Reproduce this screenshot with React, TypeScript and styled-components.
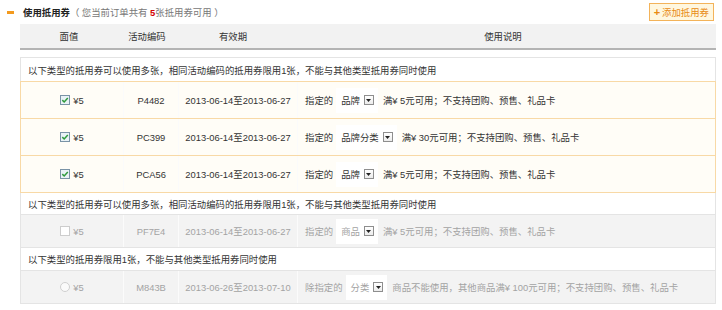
import React from "react";
import styled, { createGlobalStyle } from "styled-components";

type Mark = "checked" | "unchecked" | "radio";

interface I_Coupon {
  code: string;
  from: string;
  to: string;
  prefix: string;
  scope: string;
  rule: string;
  mark: Mark;
  on: boolean;
}

interface I_Group {
  title: string;
  titleHeight: number;
  rowHeight: number;
  coupons: I_Coupon[];
}

const multiText =
  "以下类型的抵用券可以使用多张，相同活动编码的抵用券限用1张，不能与其他类型抵用券同时使用";
const rule5 = "满¥ 5元可用；不支持团购、预售、礼品卡";

const groups: I_Group[] = [
  {
    title: multiText,
    titleHeight: 25,
    rowHeight: 38,
    coupons: [
      { code: "P4482", from: "2013-06-14", to: "2013-06-27", prefix: "指定的", scope: "品牌", rule: rule5, mark: "checked", on: true },
      { code: "PC399", from: "2013-06-14", to: "2013-06-27", prefix: "指定的", scope: "品牌分类", rule: "满¥ 30元可用；不支持团购、预售、礼品卡", mark: "checked", on: true },
      { code: "PCA56", from: "2013-06-14", to: "2013-06-27", prefix: "指定的", scope: "品牌", rule: rule5, mark: "checked", on: true },
    ],
  },
  {
    title: multiText,
    titleHeight: 23,
    rowHeight: 34,
    coupons: [
      { code: "PF7E4", from: "2013-06-14", to: "2013-06-27", prefix: "指定的", scope: "商品", rule: rule5, mark: "unchecked", on: false },
    ],
  },
  {
    title: "以下类型的抵用券限用1张，不能与其他类型抵用券同时使用",
    titleHeight: 24,
    rowHeight: 34,
    coupons: [
      { code: "M843B", from: "2013-06-26", to: "2013-07-10", prefix: "除指定的", scope: "分类", rule: "商品不能使用，其他商品满¥ 100元可用；不支持团购、预售、礼品卡", mark: "radio", on: false },
    ],
  },
];

const MarkIcon: React.FC<{ mark: Mark }> = ({ mark }) => {
  if (mark === "radio") {
    return (
      <svg width="10" height="10" viewBox="0 0 10 10">
        <circle cx="5" cy="5" r="4.5" fill="#fafafa" stroke="#cfcfcf" />
      </svg>
    );
  }
  if (mark === "unchecked") {
    return (
      <svg width="10" height="10" viewBox="0 0 10 10">
        <rect x="0.5" y="0.5" width="9" height="9" fill="#fff" stroke="#cdcdcd" />
      </svg>
    );
  }
  return (
    <svg width="10" height="10" viewBox="0 0 10 10">
      <rect x="0.5" y="0.5" width="9" height="9" fill="#e9f2f6" stroke="#7a93a6" />
      <path d="M2.3 5.1 L4.2 7 L7.8 3" fill="none" stroke="#2e9a3c" strokeWidth="1.5" />
    </svg>
  );
};

const App: React.FC = () => {
  return (
    <Panel>
      <GlobalStyle />
      <TitleBar>
        <TitleMain>
          <Minus />
          <Title>使用抵用券</Title>
          <Sub>
            （ 您当前订单共有 <Count>5</Count>张抵用券可用 ）
          </Sub>
        </TitleMain>
        <AddButton>
          <Plus>+</Plus>添加抵用券
        </AddButton>
      </TitleBar>

      <HeadRow>
        <span>面值</span>
        <span>活动编码</span>
        <span>有效期</span>
        <span>使用说明</span>
      </HeadRow>

      <Body>
        {groups.map((g, gi) => (
          <React.Fragment key={gi}>
            <GroupTitle $h={g.titleHeight}>{g.title}</GroupTitle>
            {g.coupons.map((c) => (
              <Row key={c.code} $on={c.on} $h={g.rowHeight}>
                <Cell $on={c.on}>
                  <Face>
                    <MarkIcon mark={c.mark} />
                    <span>¥5</span>
                  </Face>
                </Cell>
                <Cell $on={c.on}>{c.code}</Cell>
                <Cell $on={c.on}>
                  {c.from}至{c.to}
                </Cell>
                <DescCell $on={c.on}>
                  <span>{c.prefix}</span>
                  <Select>
                    <span>{c.scope}</span>
                    <ArrowBox>
                      <svg width="5" height="3" viewBox="0 0 5 3">
                        <path d="M0 0h5L2.5 3z" fill="#222" />
                      </svg>
                    </ArrowBox>
                  </Select>
                  <Rule>{c.rule}</Rule>
                </DescCell>
              </Row>
            ))}
          </React.Fragment>
        ))}
      </Body>
    </Panel>
  );
};

export default App;

const GlobalStyle = createGlobalStyle`
  body {
    margin: 0;
    background: #fff;
    font-family: "Liberation Sans", "Noto Sans CJK SC", sans-serif;
    font-size: 9.4px;
    color: #333;
  }
`;

const Panel = styled.div`
  width: 722px;
  padding: 0 6px;
  box-sizing: border-box;
`;

const TitleBar = styled.div`
  display: flex;
  align-items: center;
  justify-content: space-between;
  height: 24px;
  padding-left: 1px;
`;

const TitleMain = styled.div`
  display: flex;
  align-items: center;
`;

const Minus = styled.span`
  width: 7px;
  height: 3px;
  background: #f39a1e;
  margin-right: 9px;
`;

const Title = styled.span`
  font-weight: bold;
  color: #222;
`;

const Sub = styled.span`
  color: #777;
`;

const Count = styled.b`
  color: #d40000;
`;

const AddButton = styled.button`
  display: flex;
  align-items: center;
  gap: 2px;
  height: 18px;
  padding: 0 4px;
  margin-right: 2px;
  border: 1px solid #f3b35a;
  background: #fff7df;
  color: #e88a12;
  font: inherit;
  cursor: pointer;
`;

const Plus = styled.b`
  font-size: 11px;
`;

const HeadRow = styled.div`
  display: grid;
  grid-template-columns: 98px 58px 114px 1fr;
  align-items: center;
  height: 24px;
  margin-left: 14px;
  background: #f2f2f2;
  border-bottom: 2px solid #b4b4b4;
  text-align: center;
  color: #333;
`;

const Body = styled.div`
  margin: 7px 0 0 14px;
`;

const GroupTitle = styled.div<{ $h: number }>`
  display: flex;
  align-items: center;
  height: ${(p) => p.$h}px;
  box-sizing: border-box;
  margin-top: -1px;
  padding-left: 7px;
  border: 1px solid #e4e4e4;
  background: #fff;
  color: #333;

  &:first-child {
    margin-top: 0;
  }
`;

const Row = styled.div<{ $on: boolean; $h: number }>`
  position: relative;
  z-index: ${(p) => (p.$on ? 1 : 0)};
  display: grid;
  grid-template-columns: 102px 55px 119px 1fr;
  height: ${(p) => p.$h}px;
  box-sizing: border-box;
  margin-top: -1px;
  border: 1px solid ${(p) => (p.$on ? "#f8d9a6" : "#e4e4e4")};
  background: ${(p) => (p.$on ? "#fffdf7" : "#f3f3f3")};
  color: ${(p) => (p.$on ? "#333" : "#a3a3a3")};
`;

const Cell = styled.div<{ $on: boolean }>`
  display: flex;
  align-items: center;
  justify-content: center;
  box-sizing: border-box;

  & + & {
    border-left: 1px solid ${(p) => (p.$on ? "#ebe7e0" : "#fbfbfb")};
  }
`;

const DescCell = styled(Cell)`
  justify-content: flex-start;
  padding-left: 7px;
  white-space: nowrap;
`;

const Face = styled.span`
  display: flex;
  align-items: center;
  gap: 3px;
`;

const Select = styled.span`
  display: inline-flex;
  align-items: center;
  gap: 4px;
  height: 25px;
  margin-left: 3px;
  padding: 0 4px 0 5px;
  background: #fff;
`;

const ArrowBox = styled.span`
  display: flex;
  align-items: center;
  justify-content: center;
  width: 10px;
  height: 10px;
  box-sizing: border-box;
  border: 1px solid #8e8e8e;
  background: linear-gradient(#fff, #ececec);
`;

const Rule = styled.span`
  margin-left: 5px;
`;
